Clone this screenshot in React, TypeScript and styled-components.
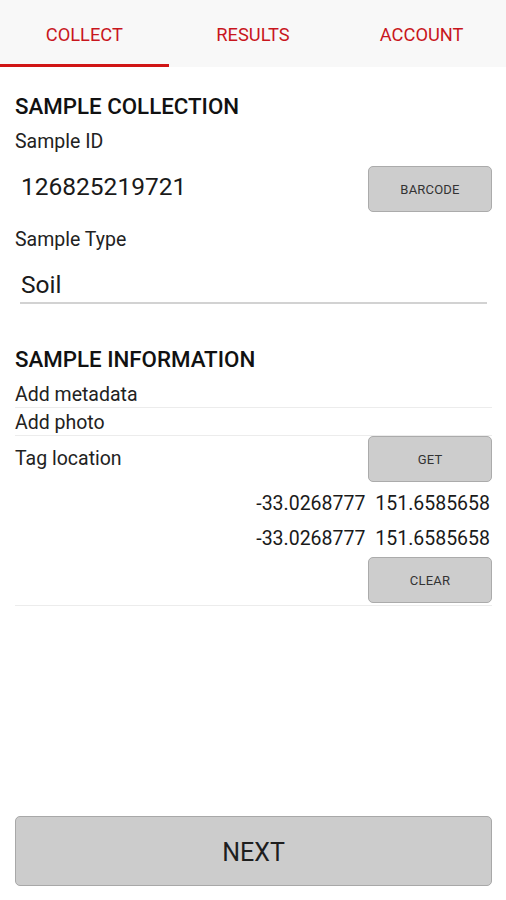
import React from 'react';
import styled, { createGlobalStyle } from 'styled-components';

const GlobalStyle = createGlobalStyle`
    html, body {
        margin: 0;
        padding: 0;
        background: #ffffff;
    }
    body {
        font-family: Roboto, "Liberation Sans", Arial, sans-serif;
        color: #222222;
    }
`;

const Screen = styled.div`
    height: 100vh;
    display: flex;
    flex-direction: column;
    box-sizing: border-box;
`;

const TabBar = styled.nav`
    display: grid;
    grid-template-columns: repeat(3, 1fr);
    height: 67px;
    background-color: #f8f8f8;
`;

const Tab = styled.div<{ $active?: boolean }>`
    box-sizing: border-box;
    display: flex;
    align-items: center;
    justify-content: center;
    padding-top: 5px;
    border-bottom: 3px solid ${(p) => (p.$active ? '#d01515' : 'transparent')};
    color: #c8161d;
    font-size: 18.3px;
    line-height: 24px;
`;

const Content = styled.main`
    flex: 1;
    display: flex;
    flex-direction: column;
    padding: 0 14px 14px 15px;
`;

const SectionTitle = styled.h2<{ $top: number }>`
    margin: ${(p) => p.$top}px 0 0;
    font-size: 22.3px;
    line-height: 28px;
    font-weight: 500;
    color: #111111;
`;

const Label = styled.div<{ $top: number }>`
    margin-top: ${(p) => p.$top}px;
    font-size: 19.5px;
    line-height: 24px;
    color: #222222;
`;

const FieldRow = styled.div`
    display: flex;
    align-items: center;
    justify-content: space-between;
    margin-top: 12px;
`;

const BigValue = styled.div`
    padding-left: 6px;
    margin-bottom: 5px;
    font-size: 24.5px;
    line-height: 30px;
    color: #1a1a1a;
`;

const InputField = styled.div`
    margin: 18px 5px 0;
    padding: 0 0 2px 1px;
    border-bottom: 2px solid #d2d2d2;
    font-size: 24.5px;
    line-height: 30px;
    color: #1a1a1a;
`;

const SmallButton = styled.button`
    box-sizing: border-box;
    width: 124px;
    height: 46px;
    flex-shrink: 0;
    border: 1px solid #ababab;
    border-radius: 5px;
    background-color: #cdcdcd;
    color: #333333;
    font-family: Roboto, "Liberation Sans", Arial, sans-serif;
    font-size: 13px;
    letter-spacing: 0.2px;
    cursor: pointer;
`;

const ListItem = styled.div<{ $first?: boolean }>`
    margin-top: ${(p) => (p.$first ? 6 : 0)}px;
    padding-top: 3.5px;
    border-bottom: 1px solid #ececec;
    font-size: 19.5px;
    line-height: 24px;
    color: #222222;
`;

const LocationBlock = styled.div`
    display: flex;
    flex-direction: column;
    align-items: flex-end;
    border-bottom: 1px solid #ececec;
`;

const LocationHeader = styled.div`
    align-self: stretch;
    display: flex;
    align-items: center;
    justify-content: space-between;
    font-size: 19.5px;
    line-height: 24px;
`;

const Coords = styled.div<{ $top: number }>`
    margin-top: ${(p) => p.$top}px;
    padding-right: 2px;
    font-size: 19.5px;
    line-height: 24px;
    color: #1a1a1a;
    word-spacing: 5px;
`;

const ClearRow = styled.div`
    margin-top: 6px;
    margin-bottom: 2px;
`;

const NextButton = styled.button`
    margin-top: auto;
    box-sizing: border-box;
    width: 100%;
    height: 70px;
    border: 1px solid #a8a8a8;
    border-radius: 5px;
    background-color: #cccccc;
    color: #1e1e1e;
    font-family: Roboto, "Liberation Sans", Arial, sans-serif;
    font-size: 25px;
    padding-top: 3px;
    cursor: pointer;
`;

const tabs = ['COLLECT', 'RESULTS', 'ACCOUNT'];
const location = '-33.0268777 151.6585658';

export default function App() {
	const [active, setActive] = React.useState<number>(0);

	return (
		<Screen>
			<GlobalStyle />
			<TabBar>
				{tabs.map((t, i) => (
					<Tab key={t} $active={i === active} onClick={() => setActive(i)}>
						{t}
					</Tab>
				))}
			</TabBar>
			<Content>
				<SectionTitle $top={25}>SAMPLE COLLECTION</SectionTitle>
				<Label $top={10}>Sample ID</Label>
				<FieldRow>
					<BigValue>126825219721</BigValue>
					<SmallButton>BARCODE</SmallButton>
				</FieldRow>
				<Label $top={16}>Sample Type</Label>
				<InputField>Soil</InputField>

				<SectionTitle $top={41}>SAMPLE INFORMATION</SectionTitle>
				<ListItem $first>Add metadata</ListItem>
				<ListItem>Add photo</ListItem>
				<LocationBlock>
					<LocationHeader>
						<span>Tag location</span>
						<SmallButton>GET</SmallButton>
					</LocationHeader>
					<Coords $top={10}>{location}</Coords>
					<Coords $top={11}>{location}</Coords>
					<ClearRow>
						<SmallButton>CLEAR</SmallButton>
					</ClearRow>
				</LocationBlock>

				<NextButton>NEXT</NextButton>
			</Content>
		</Screen>
	);
}
